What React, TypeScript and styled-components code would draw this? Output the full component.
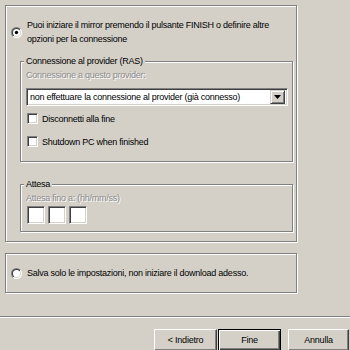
import React from 'react'
import styled, { createGlobalStyle } from 'styled-components'

const GlobalStyle = createGlobalStyle`
  html, body {
    margin: 0;
    padding: 0;
    background: #d4d0c8;
  }
  body {
    font-family: "Liberation Sans", Arial, sans-serif;
    font-size: 9px;
    color: #000;
  }
`;

const Dialog = styled.div`
  width: 350px;
  height: 350px;
  overflow: hidden;
  display: flex;
  flex-direction: column;
  letter-spacing: -0.25px;
`;

const Body = styled.div`
  display: flex;
  flex-direction: column;
  padding: 5px 0 0 5px;
`;

const Panel = styled.div<{ $h: number; $center?: boolean }>`
  box-sizing: border-box;
  width: 292px;
  height: ${p => p.$h}px;
  border: 1px solid #808080;
  box-shadow: inset 1px 1px 0 #fff, 1px 1px 0 #fff;
  display: flex;
  flex-direction: column;
  justify-content: ${p => (p.$center ? 'center' : 'flex-start')};
  padding: ${p => (p.$center ? '0 0 0 5px' : '12px 0 0 5px')};
  & + & {
    margin-top: 11px;
  }
`;

const OptionRow = styled.div`
  display: flex;
  align-items: center;
  gap: 5px;
`;

const OptionText = styled.div`
  line-height: 14px;
  max-width: 262px;
`;

const Group = styled.fieldset<{ $top: number }>`
  box-sizing: border-box;
  width: 273px;
  margin: ${p => p.$top}px 0 0 9px;
  padding: 0 5px ${p => (p.$top > 12 ? 7 : 13)}px 5px;
  border: 1px solid #808080;
  box-shadow: inset 1px 1px 0 #fff, 1px 1px 0 #fff;
  display: flex;
  flex-direction: column;
  min-width: 0;
`;

const Legend = styled.legend`
  padding: 0 2px;
  margin-left: -2px;
  line-height: 13px;
  background: #d4d0c8;
`;

const Disabled = styled.div`
  line-height: 13px;
  color: #8c8c8c;
  text-shadow: 1px 1px 0 #fff;
  margin-top: 1px;
`;

const Sunken = `
  box-sizing: border-box;
  background: #fff;
  border: 1px solid;
  border-color: #808080 #fff #fff #808080;
  box-shadow: inset 1px 1px 0 #404040, inset -1px -1px 0 #d4d0c8;
`;

const Select = styled.div`
  ${Sunken}
  width: 262px;
  height: 18px;
  margin-top: 6px;
  display: flex;
  align-items: center;
  justify-content: space-between;
  padding: 2px 2px 2px 3px;
`;

const DropButton = styled.div`
  box-sizing: border-box;
  width: 15px;
  height: 14px;
  background: #d4d0c8;
  border: 1px solid;
  border-color: #d4d0c8 #404040 #404040 #d4d0c8;
  box-shadow: inset 1px 1px 0 #fff, inset -1px -1px 0 #808080;
  display: flex;
  align-items: center;
  justify-content: center;
`;

const CheckRow = styled.label<{ $gap: number }>`
  display: flex;
  align-items: center;
  gap: 4px;
  height: 13px;
  margin-top: ${p => p.$gap}px;
  padding-left: 1px;
`;

const CheckBox = styled.span`
  ${Sunken}
  display: block;
  width: 11px;
  height: 11px;
`;

const TimeRow = styled.div`
  display: flex;
  gap: 3px;
  margin-top: 1px;
  padding-left: 1px;
`;

const TimeBox = styled.div`
  ${Sunken}
  width: 18px;
  height: 18px;
`;

const Separator = styled.div`
  margin-top: 23px;
  height: 0;
  border-top: 1px solid #808080;
  border-bottom: 1px solid #fff;
`;

const Footer = styled.div`
  display: flex;
  justify-content: flex-end;
  padding: 11px 1px 0 0;
`;

const Button = styled.button<{ $w: number; $default?: boolean; $gap?: number }>`
  box-sizing: border-box;
  width: ${p => p.$w}px;
  height: 22px;
  margin-left: ${p => p.$gap ?? 0}px;
  padding: 0;
  font: inherit;
  letter-spacing: inherit;
  color: #000;
  background: #d4d0c8;
  border: 1px solid;
  border-color: ${p => (p.$default ? '#000' : '#fff #404040 #404040 #fff')};
  box-shadow: ${p =>
    p.$default
      ? 'inset 1px 1px 0 #fff, inset -1px -1px 0 #404040, inset -2px -2px 0 #808080'
      : 'inset -1px -1px 0 #808080'};
`;

const Radio = ({ checked }: { checked?: boolean }) => (
  <svg width="11" height="11" viewBox="0 0 11 11" style={{ flex: 'none' }}>
    <defs>
      <linearGradient id="rOuter" x1="0" y1="0" x2="1" y2="1">
        <stop offset="50%" stopColor="#808080" />
        <stop offset="50%" stopColor="#fff" />
      </linearGradient>
      <linearGradient id="rInner" x1="0" y1="0" x2="1" y2="1">
        <stop offset="50%" stopColor="#404040" />
        <stop offset="50%" stopColor="#d4d0c8" />
      </linearGradient>
    </defs>
    <circle cx="5.5" cy="5.5" r="5.5" fill="url(#rOuter)" />
    <circle cx="5.5" cy="5.5" r="4.5" fill="url(#rInner)" />
    <circle cx="5.5" cy="5.5" r="3.5" fill="#fff" />
    {checked && <circle cx="5.5" cy="5.5" r="1.7" fill="#000" />}
  </svg>
);

const Arrow = () => (
  <svg width="7" height="4" viewBox="0 0 7 4">
    <path d="M0 0h7L3.5 4z" fill="#000" />
  </svg>
);

export default function App() {
  return (
    <Dialog>
      <GlobalStyle />
      <Body>
        <Panel $h={237}>
          <OptionRow>
            <Radio checked />
            <OptionText>
              Puoi iniziare il mirror premendo il pulsante FINISH o definire altre opzioni per la connessione
            </OptionText>
          </OptionRow>

          <Group $top={9}>
            <Legend>Connessione al provider (RAS)</Legend>
            <Disabled>Connessione a questo provider:</Disabled>
            <Select>
              <span>non effettuare la connessione al provider (già connesso)</span>
              <DropButton>
                <Arrow />
              </DropButton>
            </Select>
            <CheckRow $gap={6}>
              <CheckBox />
              Disconnetti alla fine
            </CheckRow>
            <CheckRow $gap={10}>
              <CheckBox />
              Shutdown PC when finished
            </CheckRow>
          </Group>

          <Group $top={16}>
            <Legend>Attesa</Legend>
            <Disabled>Attesa fino a: (hh/mm/ss)</Disabled>
            <TimeRow>
              <TimeBox />
              <TimeBox />
              <TimeBox />
            </TimeRow>
          </Group>
        </Panel>

        <Panel $h={40} $center>
          <OptionRow>
            <Radio />
            <OptionText>Salva solo le impostazioni, non iniziare il download adesso.</OptionText>
          </OptionRow>
        </Panel>
      </Body>

      <Separator />

      <Footer>
        <Button $w={63}>&lt; Indietro</Button>
        <Button $w={63} $gap={1} $default>Fine</Button>
        <Button $w={61} $gap={7}>Annulla</Button>
      </Footer>
    </Dialog>
  )
}
